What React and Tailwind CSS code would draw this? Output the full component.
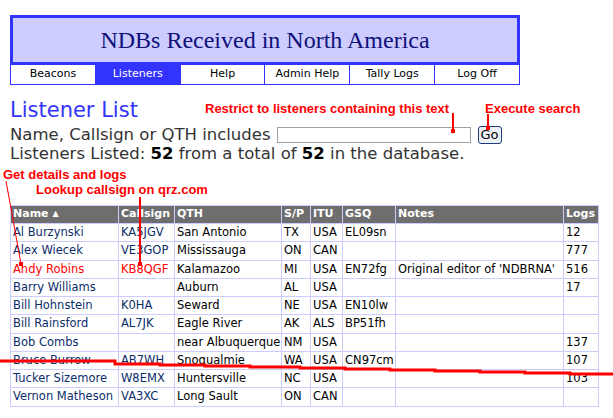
import React from "react";

const navItems = ["Beacons", "Listeners", "Help", "Admin Help", "Tally Logs", "Log Off"];

const listeners = [
    { name: "Al Burzynski", call: "KA5JGV", qth: "San Antonio", sp: "TX", itu: "USA", gsq: "EL09sn", notes: "", logs: "12" },
    { name: "Alex Wiecek", call: "VE3GOP", qth: "Mississauga", sp: "ON", itu: "CAN", gsq: "", notes: "", logs: "777" },
    { name: "Andy Robins", call: "KB8QGF", qth: "Kalamazoo", sp: "MI", itu: "USA", gsq: "EN72fg", notes: "Original editor of 'NDBRNA'", logs: "516", hot: true },
    { name: "Barry Williams", call: "", qth: "Auburn", sp: "AL", itu: "USA", gsq: "", notes: "", logs: "17" },
    { name: "Bill Hohnstein", call: "K0HA", qth: "Seward", sp: "NE", itu: "USA", gsq: "EN10lw", notes: "", logs: "" },
    { name: "Bill Rainsford", call: "AL7JK", qth: "Eagle River", sp: "AK", itu: "ALS", gsq: "BP51fh", notes: "", logs: "" },
    { name: "Bob Combs", call: "", qth: "near Albuquerque", sp: "NM", itu: "USA", gsq: "", notes: "", logs: "137" },
    { name: "Bruce Burrow", call: "AB7WH", qth: "Snoqualmie", sp: "WA", itu: "USA", gsq: "CN97cm", notes: "", logs: "107" },
    { name: "Tucker Sizemore", call: "W8EMX", qth: "Huntersville", sp: "NC", itu: "USA", gsq: "", notes: "", logs: "103" },
    { name: "Vernon Matheson", call: "VA3XC", qth: "Long Sault", sp: "ON", itu: "CAN", gsq: "", notes: "", logs: "" },
];

const verdana = "font-['DejaVu_Sans',Verdana,sans-serif]";
const narrow = "font-['Liberation_Sans_Narrow','Liberation_Sans',Arial,sans-serif] font-bold text-[#ff0000] whitespace-nowrap text-[13px] leading-none absolute";

const Callouts = () => (
    <>
        <span className={`${narrow} left-[205px] top-[102px]`}>Restrict to listeners containing this text</span>
        <span className={`${narrow} left-[485px] top-[102px]`}>Execute search</span>
        <span className={`${narrow} left-[3px] top-[168px]`}>Get details and logs</span>
        <span className={`${narrow} left-[36px] top-[183px]`}>Lookup callsign on qrz.com</span>
        <svg className="absolute left-0 top-0 pointer-events-none" width="613" height="418">
            <g stroke="#ff0000" strokeWidth="2" fill="#ff0000">
                <line x1="453" y1="113" x2="453" y2="131" />
                <rect x="451" y="129" width="4" height="4" stroke="none" />
                <line x1="488" y1="114" x2="488" y2="128" />
                <rect x="486" y="126" width="4" height="4" stroke="none" />
                <line x1="6" y1="181" x2="21" y2="264" strokeWidth="1" />
                <rect x="19" y="262" width="4" height="4" stroke="none" />
                <line x1="140" y1="197" x2="140" y2="264" />
                <rect x="138" y="262" width="4" height="4" stroke="none" />
            </g>
            <polyline
                fill="none"
                stroke="#ff0000"
                strokeWidth="3"
                points="0,361 115,361 115,364 160,364 160,365 205,365 205,366 250,366 250,367 300,367 300,368 345,368 345,369 390,369 390,370 435,370 435,371 480,371 480,372 525,372 525,373 570,373 570,374 613,374"
            />
        </svg>
    </>
);

const App = () => {
    return (
        <div className="relative w-[613px] h-[418px] bg-white overflow-hidden">
            <div className="pt-[15px] pl-[10px]">
                <div className="w-[510px] h-[50px] border-[3px] border-[#3333ff] bg-[#ccccff] flex items-center justify-center">
                    <h1 className="font-['Liberation_Serif','Times_New_Roman',serif] text-[24px] text-[#10107a] leading-none">
                        NDBs Received in North America
                    </h1>
                </div>
                <div className="w-[510px] flex border border-t-0 border-[#3333ff]">
                    {navItems.map((item, i) => (
                        <div
                            key={item}
                            className={`flex-1 h-[19px] flex items-center justify-center text-[11px] ${verdana} ${i > 0 ? "border-l border-[#3333ff]" : ""} ${item === "Listeners" ? "bg-[#3333ff] text-white" : "text-black"}`}
                        >
                            {item}
                        </div>
                    ))}
                </div>

                <h2 className={`${verdana} text-[21px] leading-[24px] text-[#3333ff] mt-[13px]`}>Listener List</h2>
                <div className={`${verdana} mt-[3px] text-[16.5px] text-[#333] leading-[19px]`}>
                    <div className="flex items-center">
                        <span>Name, Callsign or QTH includes</span>
                        <input className="ml-[6px] w-[194px] h-[16px] border border-[#a0a0a0] bg-white" />
                        <button className="ml-[7px] h-[18px] px-[2px] text-[13px] leading-none border border-[#1c3d7a] rounded-[3px] bg-[#eef0f8] text-black">Go</button>
                    </div>
                    <div>
                        Listeners Listed: <span className="text-black font-bold">52</span> from a total of <span className="text-black font-bold">52</span> in the database.
                    </div>
                </div>

                <table className={`${verdana} mt-[42px] w-[588px] table-fixed border-collapse text-[11.5px]`}>
                    <colgroup>
                        <col className="w-[108px]" />
                        <col className="w-[56px]" />
                        <col className="w-[107px]" />
                        <col className="w-[29px]" />
                        <col className="w-[32px]" />
                        <col className="w-[53px]" />
                        <col className="w-[168px]" />
                        <col className="w-[35px]" />
                    </colgroup>
                    <thead>
                        <tr className="bg-[#6e6e6e] text-white h-[18px] text-[11px]">
                            {["Name", "Callsign", "QTH", "S/P", "ITU", "GSQ", "Notes", "Logs"].map((h) => (
                                <th key={h} className="border border-[#ccccff] px-[2px] text-left font-bold whitespace-nowrap overflow-hidden">
                                    {h}
                                    {h === "Name" && <span className="ml-[4px] text-[8px] align-middle">▲</span>}
                                </th>
                            ))}
                        </tr>
                    </thead>
                    <tbody>
                        {listeners.map((l) => (
                            <tr key={l.name} className="h-[18px]">
                                <td className={`border border-[#ccccff] px-[2px] whitespace-nowrap ${l.hot ? "text-[#ff0000]" : "text-[#0b2d6b]"}`}>{l.name}</td>
                                <td className={`border border-[#ccccff] px-[2px] whitespace-nowrap ${l.hot ? "text-[#ff0000]" : "text-[#0b2d6b]"}`}>{l.call}</td>
                                <td className="border border-[#ccccff] px-[2px] whitespace-nowrap">{l.qth}</td>
                                <td className="border border-[#ccccff] px-[2px]">{l.sp}</td>
                                <td className="border border-[#ccccff] px-[2px]">{l.itu}</td>
                                <td className="border border-[#ccccff] px-[2px]">{l.gsq}</td>
                                <td className="border border-[#ccccff] px-[2px] whitespace-nowrap">{l.notes}</td>
                                <td className="border border-[#ccccff] px-[2px]">{l.logs}</td>
                            </tr>
                        ))}
                    </tbody>
                </table>
            </div>
            <Callouts />
        </div>
    );
};

export default App;
